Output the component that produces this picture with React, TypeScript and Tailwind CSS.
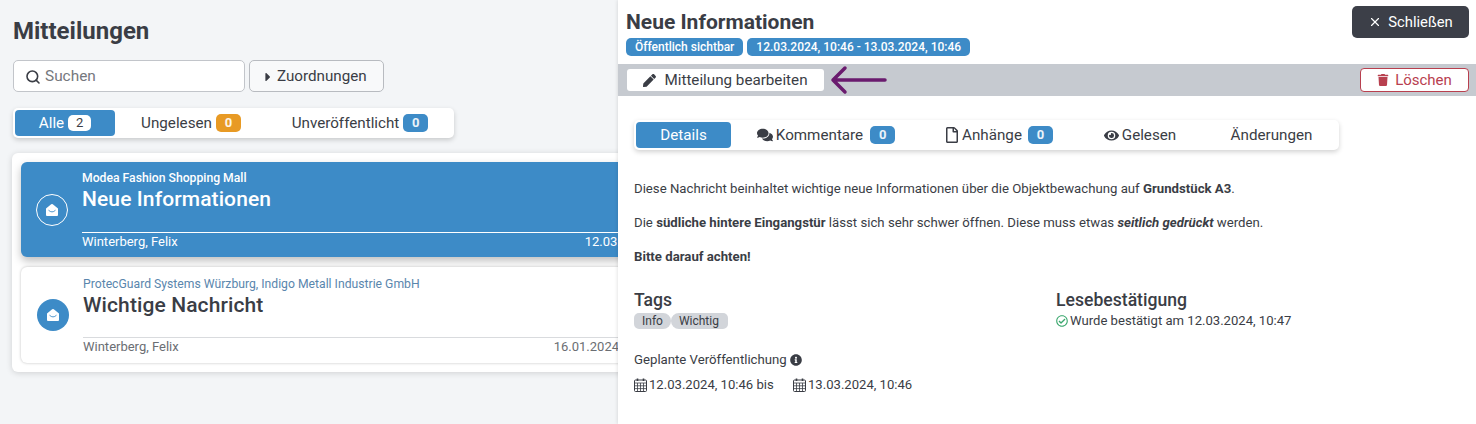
import { Search, X } from 'lucide-react'
import { FaCaretRight, FaComments, FaEye, FaInfoCircle, FaPen, FaRegCheckCircle, FaRegFile, FaTrash } from 'react-icons/fa'

function Count({ value, color = 'bg-[#3d8bc7]' }: { value: number; color?: string }) {
  return (
    <span className={`inline-flex h-[18px] w-[25px] items-center justify-center rounded-[5px] text-[13px] font-bold text-white/90 ${color}`}>
      {value}
    </span>
  )
}

// open envelope, white body with a thin fold line
function EnvelopeIcon() {
  return (
    <svg width="14" height="14" viewBox="0 0 14 14">
      <path d="M1 5.6L6.2 1.2Q7 .6 7.8 1.2L13 5.6V12Q13 13 12 13H2Q1 13 1 12Z" fill="#fff" />
      <path d="M3.5 7.2Q7 10.6 10.5 7.2" fill="none" stroke="#3d8bc7" strokeWidth="0.9" />
    </svg>
  )
}

function CalendarIcon() {
  return (
    <svg width="13" height="14" viewBox="0 0 13 14" fill="none" stroke="#3a3d45" strokeWidth="1" className="mr-[2px] shrink-0">
      <rect x="0.5" y="2" width="12" height="11.5" rx="1" />
      <path d="M0.5 5H12.5M0.5 7.8H12.5M0.5 10.6H12.5M3.5 5V13.5M6.5 5V13.5M9.5 5V13.5" strokeWidth="0.8" />
      <path d="M3.5 0.5V3M9.5 0.5V3" strokeWidth="1.6" />
    </svg>
  )
}

function MessageCard({
  active,
  company,
  title,
  author,
  date,
  dateClass
}: {
  active?: boolean
  company: string
  title: string
  author: string
  date: string
  dateClass: string
}) {
  return (
    <div
      className={`flex items-stretch rounded-[6px] ${
        active
          ? 'h-[95px] bg-[#3d8bc7] text-white shadow-[0_4px_8px_rgba(0,0,0,0.25)]'
          : 'h-[96px] bg-white pl-[1px] text-[#3a3d45] shadow-[0_0_3px_rgba(0,0,0,0.25)]'
      }`}
    >
      <div className="flex w-[61px] shrink-0 items-center justify-center">
        <div
          className={`flex h-[32px] w-[32px] items-center justify-center rounded-full ${
            active ? 'border border-white' : 'bg-[#3d8bc7]'
          }`}
        >
          <EnvelopeIcon />
        </div>
      </div>
      <div className="flex min-w-0 flex-1 flex-col">
        <div className={`h-[18px] text-[12.2px] leading-[18px] ${active ? 'mt-[7px] font-medium text-white' : 'mt-[8px] text-[#5a86ad]'}`}>{company}</div>
        <div className="mt-[-1px] text-[21px] leading-[26px] font-medium tracking-[0.005em]">{title}</div>
        <div
          className={`mt-auto flex items-start justify-between border-t text-[13px] leading-[18px] ${
            active ? 'h-[25px] border-white' : 'h-[26px] border-[#d9dbde] text-[#6b6e73]'
          }`}
        >
          <span>{author}</span>
          <span className={dateClass}>{date}</span>
        </div>
      </div>
    </div>
  )
}

function Tab({ children, active, className = '' }: { children: React.ReactNode; active?: boolean; className?: string }) {
  return (
    <div
      className={`flex h-[26px] items-center justify-center rounded-[4px] text-[15.2px] ${
        active ? 'bg-[#3d8bc7] text-white' : 'text-[#3a3d45]'
      } ${className}`}
    >
      {children}
    </div>
  )
}

export default function App() {
  return (
    <div className="flex h-[424px] w-[1476px] overflow-hidden bg-[#f3f5f7] font-['Roboto',sans-serif] text-[#3a3d45]">
      <div className="w-[618px] shrink-0 overflow-hidden">
        <div className="w-[660px] pt-[18px]">
          <h1 className="ml-[13px] text-[24px] font-bold leading-[26px]">Mitteilungen</h1>

          <div className="ml-[13px] mt-[16px] flex gap-[4px]">
            <div className="flex h-[32px] w-[232px] items-center gap-[4px] rounded-[5px] border border-[#c2c5ca] bg-white pl-[11px] pt-[1px] text-[15.4px] text-[#75787d]">
              <Search size={16} strokeWidth={2.4} className="text-[#3a3d45]" />
              Suchen
            </div>
            <div className="flex h-[32px] w-[135px] items-center gap-[2px] rounded-[5px] border border-[#b8bbc0] bg-[#f8f9fa] pl-[11px] pt-[1px] text-[15.2px]">
              <FaCaretRight className="text-[14px]" />
              Zuordnungen
            </div>
          </div>

          <div className="ml-[13px] mt-[16px] flex h-[30px] w-[441px] items-center rounded-[5px] bg-white pl-[2px] shadow-[0_2px_5px_rgba(0,0,0,0.18)]">
            <Tab active className="w-[100px] gap-[4px]">
              Alle
              <span className="inline-flex h-[16px] w-[23px] items-center justify-center rounded-[5px] bg-white text-[13px] text-[#3a3d45]">2</span>
            </Tab>
            <Tab className="w-[152px] gap-[4px]">
              Ungelesen
              <Count value={0} color="bg-[#e89a24]" />
            </Tab>
            <Tab className="w-[186px] gap-[4px]">
              Unveröffentlicht
              <Count value={0} />
            </Tab>
          </div>

          <div className="ml-[12px] mt-[15px] flex w-[640px] flex-col gap-[10px] rounded-[6px] bg-white py-[9px] pl-[9px] pr-[8px] shadow-[0_1px_6px_rgba(0,0,0,0.15)]">
            <MessageCard
              active
              company="Modea Fashion Shopping Mall"
              title="Neue Informationen"
              author="Winterberg, Felix"
              date="12.03.2024"
              dateClass="mr-[-6px]"
            />
            <MessageCard
              company="ProtecGuard Systems Würzburg, Indigo Metall Industrie GmbH"
              title="Wichtige Nachricht"
              author="Winterberg, Felix"
              date="16.01.2024"
              dateClass="mr-[25px]"
            />
          </div>
        </div>
      </div>

      <div className="flex min-w-0 flex-1 flex-col bg-white shadow-[0_0_4px_rgba(0,0,0,0.15)]">
        <div className="flex h-[64px] justify-between pl-[8px] pr-[7px]">
          <div>
            <h2 className="mt-[9px] text-[21px] font-bold leading-[26px]">Neue Informationen</h2>
            <div className="mt-[3px] flex gap-[4px]">
              <span className="flex h-[18px] items-center rounded-[5px] bg-[#3d8bc7] px-[9px] text-[12px] font-medium text-white">Öffentlich sichtbar</span>
              <span className="flex h-[18px] items-center rounded-[5px] bg-[#3d8bc7] px-[9px] text-[12px] font-medium text-white">12.03.2024, 10:46 - 13.03.2024, 10:46</span>
            </div>
          </div>
          <button className="mt-[6px] flex h-[32px] w-[117px] items-center justify-center gap-[6px] rounded-[5px] bg-[#3c3f48] text-[14.8px] text-white">
            <X size={14} strokeWidth={2} />
            Schließen
          </button>
        </div>

        <div className="flex h-[32px] items-center justify-between bg-[#c6cad0] pl-[9px] pr-[7px]">
          <div className="flex items-center">
            <button className="flex h-[22px] w-[197px] items-center justify-center gap-[8px] rounded-[3px] bg-white text-[15.2px]">
              <FaPen className="text-[13px]" />
              Mitteilung bearbeiten
            </button>
            <svg width="58" height="30" viewBox="0 0 58 30" className="ml-[6px]" fill="none" stroke="#6a1b6e" strokeWidth="3.5" strokeLinecap="round" strokeLinejoin="round">
              <path d="M3 15H55M15 3L3 15L15 27" />
            </svg>
          </div>
          <button className="flex h-[24px] w-[109px] items-center justify-center gap-[6px] rounded-[4px] border border-[#b8404f] bg-white text-[15px] text-[#b8404f]">
            <FaTrash className="text-[12px]" />
            Löschen
          </button>
        </div>

        <div className="ml-[16px] mt-[24px] flex h-[30px] w-[705px] items-center rounded-[5px] bg-white pl-[2px] shadow-[0_2px_5px_rgba(0,0,0,0.18)]">
          <Tab active className="w-[95px]">Details</Tab>
          <Tab className="w-[190px]">
            <FaComments className="mr-[3px] text-[16px]" />
            Kommentare
            <Count value={0} color="ml-[7px] bg-[#3d8bc7]" />
          </Tab>
          <Tab className="w-[155px]">
            <FaRegFile className="mr-[2px] text-[16px]" />
            Anhänge
            <Count value={0} color="ml-[6px] bg-[#3d8bc7]" />
          </Tab>
          <Tab className="w-[128px]">
            <FaEye className="mr-[3px] text-[15px]" />
            Gelesen
          </Tab>
          <Tab className="w-[135px]">Änderungen</Tab>
        </div>

        <div className="ml-[16px] mt-[30px] text-[13.2px] leading-[18px]">
          <p>Diese Nachricht beinhaltet wichtige neue Informationen über die Objektbewachung auf <b>Grundstück A3</b>.</p>
          <p className="mt-[16px]">
            Die <b>südliche hintere Eingangstür</b> lässt sich sehr schwer öffnen. Diese muss etwas <b><i>seitlich gedrückt</i></b> werden.
          </p>
          <p className="mt-[16px] font-bold">Bitte darauf achten!</p>
        </div>

        <div className="ml-[16px] mt-[23px] flex">
          <div className="w-[422px]">
            <h3 className="text-[17.6px] font-medium leading-[22px]">Tags</h3>
            <div className="mt-[2px] flex">
              <span className="flex h-[16px] items-center rounded-l-[5px] rounded-r-[8px] bg-[#d2d5da] px-[8px] text-[12px]">Info</span>
              <span className="flex h-[16px] items-center rounded-[5px] rounded-l-[8px] bg-[#d2d5da] pl-[8px] pr-[9px] text-[12px]">Wichtig</span>
            </div>
          </div>
          <div>
            <h3 className="text-[17.6px] font-medium leading-[22px]">Lesebestätigung</h3>
            <div className="mt-[2px] flex h-[16px] items-center gap-[2px] text-[13.1px]">
              <FaRegCheckCircle className="text-[12px] text-[#3aa76d]" />
              Wurde bestätigt am 12.03.2024, 10:47
            </div>
          </div>
        </div>

        <div className="ml-[16px] mt-[22px] flex items-center gap-[3px] text-[13.2px] leading-[18px]">
          Geplante Veröffentlichung
          <FaInfoCircle className="text-[12px]" />
        </div>
        <div className="ml-[16px] mt-[7px] flex items-center text-[13.1px] leading-[18px]">
          <CalendarIcon />
          <span className="w-[144px]">12.03.2024, 10:46 bis</span>
          <CalendarIcon />
          <span>13.03.2024, 10:46</span>
        </div>
      </div>
    </div>
  )
}
